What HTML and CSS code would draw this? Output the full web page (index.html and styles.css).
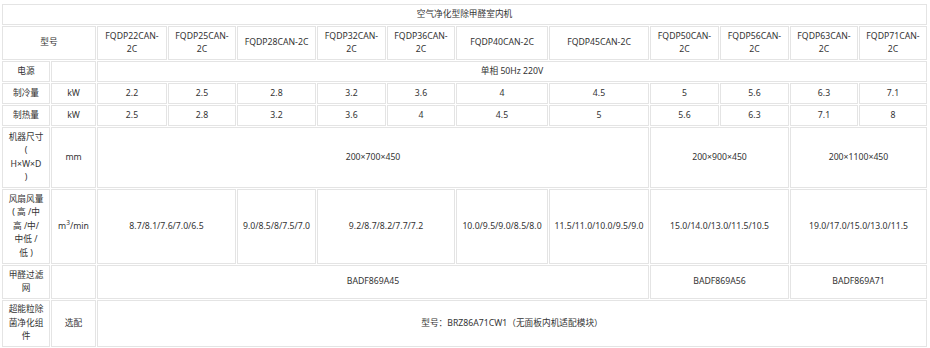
FILE: index.html
```html
<!DOCTYPE html>
<html lang="zh-CN">
<head>
<meta charset="utf-8">
<title>空气净化型除甲醛室内机</title>
<link rel="stylesheet" href="styles.css">
</head>
<body>
<div class="spec">
  <div class="c s13">空气净化型除甲醛室内机</div>

  <div class="c s2">型号</div>
  <div class="c">FQDP22CAN-<wbr>2C</div>
  <div class="c">FQDP25CAN-<wbr>2C</div>
  <div class="c">FQDP28CAN-<wbr>2C</div>
  <div class="c">FQDP32CAN-<wbr>2C</div>
  <div class="c">FQDP36CAN-<wbr>2C</div>
  <div class="c">FQDP40CAN-<wbr>2C</div>
  <div class="c">FQDP45CAN-<wbr>2C</div>
  <div class="c">FQDP50CAN-<wbr>2C</div>
  <div class="c">FQDP56CAN-<wbr>2C</div>
  <div class="c">FQDP63CAN-<wbr>2C</div>
  <div class="c">FQDP71CAN-<wbr>2C</div>

  <div class="c">电源</div>
  <div class="c"></div>
  <div class="c s11">单相 50Hz 220V</div>

  <div class="c">制冷量</div>
  <div class="c">kW</div>
  <div class="c">2.2</div>
  <div class="c">2.5</div>
  <div class="c">2.8</div>
  <div class="c">3.2</div>
  <div class="c">3.6</div>
  <div class="c">4</div>
  <div class="c">4.5</div>
  <div class="c">5</div>
  <div class="c">5.6</div>
  <div class="c">6.3</div>
  <div class="c">7.1</div>

  <div class="c">制热量</div>
  <div class="c">kW</div>
  <div class="c">2.5</div>
  <div class="c">2.8</div>
  <div class="c">3.2</div>
  <div class="c">3.6</div>
  <div class="c">4</div>
  <div class="c">4.5</div>
  <div class="c">5</div>
  <div class="c">5.6</div>
  <div class="c">6.3</div>
  <div class="c">7.1</div>
  <div class="c">8</div>

  <div class="c">机器尺寸<br>(<br>H×W×D<br>)</div>
  <div class="c">mm</div>
  <div class="c s7">200×700×450</div>
  <div class="c s2">200×900×450</div>
  <div class="c s2">200×1100×450</div>

  <div class="c">风扇风量<br>( 高 /中<br>高 /中/<br>中低 /<br>低 )</div>
  <div class="c"><span>m<sup class="sup">3</sup>/min</span></div>
  <div class="c s2">8.7/8.1/7.6/7.0/6.5</div>
  <div class="c">9.0/8.5/8/7.5/7.0</div>
  <div class="c s2">9.2/8.7/8.2/7.7/7.2</div>
  <div class="c">10.0/9.5/9.0/8.5/8.0</div>
  <div class="c">11.5/11.0/10.0/9.5/9.0</div>
  <div class="c s2">15.0/14.0/13.0/11.5/10.5</div>
  <div class="c s2">19.0/17.0/15.0/13.0/11.5</div>

  <div class="c">甲醛过滤<br>网</div>
  <div class="c"></div>
  <div class="c s7">BADF869A45</div>
  <div class="c s2">BADF869A56</div>
  <div class="c s2">BADF869A71</div>

  <div class="c">超能粒除<br>菌净化组<br>件</div>
  <div class="c">选配</div>
  <div class="c s11">型号：BRZ86A71CW1（无面板内机适配模块）</div>
</div>
</body>
</html>
```

FILE: styles.css
```css
html, body {
  margin: 0;
  padding: 0;
  background: #ffffff;
}

.spec {
  margin: 4px 0 0 2px;
  display: grid;
  grid-template-columns: 48px 45px 70px 68px 79px 69px 68px 92px 100px 69px 69px 68px 68px;
  grid-template-rows: 21px 34px 21px 21px 21px 61px 75px 34px 47px;
  gap: 1px;
  font-family: "Noto Sans", "Noto Sans CJK SC", sans-serif;
  font-size: 8.7px;
  line-height: 13.5px;
  color: #333333;
}

.c {
  border: 1px solid #e4e4e4;
  padding: 0 4px;
  display: flex;
  align-items: center;
  justify-content: center;
  text-align: center;
  overflow: hidden;
}

.sup {
  font-size: 6.5px;
  line-height: 1;
  vertical-align: super;
}

.s2 { grid-column: span 2; }
.s7 { grid-column: span 7; }
.s11 { grid-column: span 11; }
.s13 { grid-column: span 13; }
```
